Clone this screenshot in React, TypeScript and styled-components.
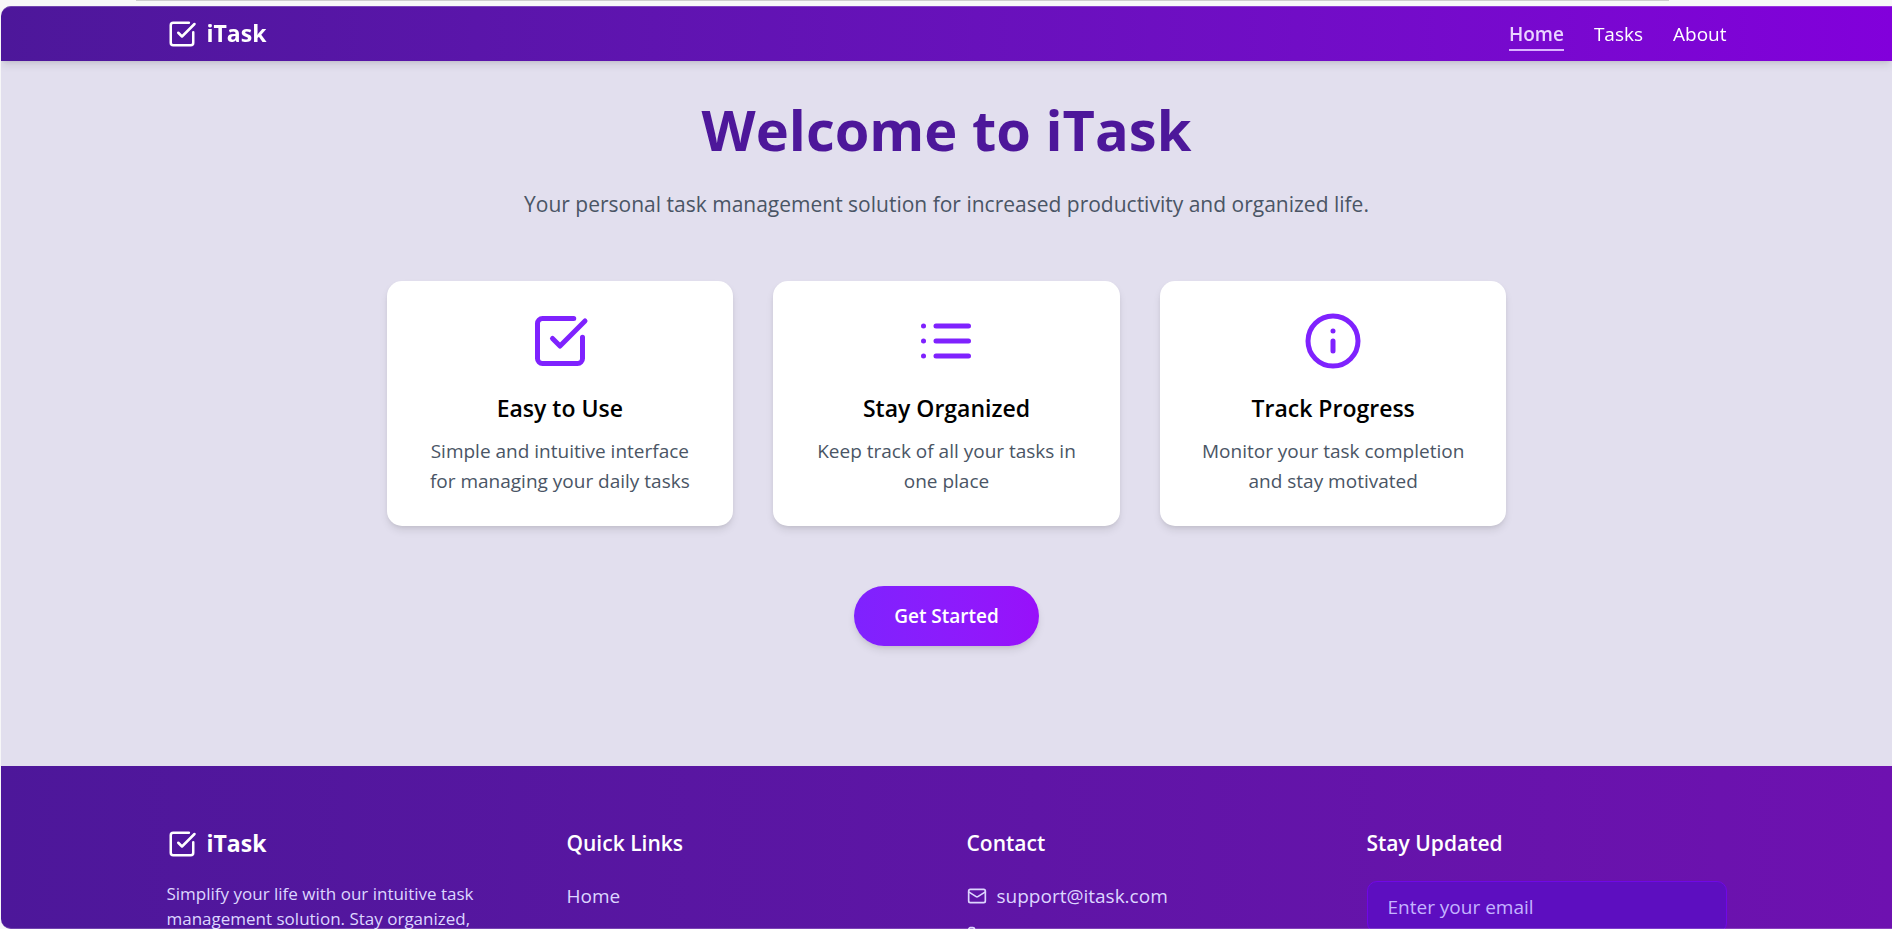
import React from "react";
import styled, { createGlobalStyle, css } from "styled-components";

const GlobalStyle = createGlobalStyle`
  *, *::before, *::after { box-sizing: border-box; }
  body {
    margin: 0;
    background: #f7f7f8;
    font-family: "Segoe UI", "Open Sans", "Noto Sans", sans-serif;
    font-size: 19px;
    line-height: 30px;
    color: #000;
  }
  h1, h2, h3, p, ul { margin: 0; padding: 0; }
  ul { list-style: none; }
  a { color: inherit; text-decoration: none; }
`;

const Window = styled.div`
  display: flex;
  flex-direction: column;
  height: 100vh;
  padding-left: 1px;
`;

const ToolbarEdge = styled.div`
  flex: none;
  height: 6px;
  padding: 0 223px 0 135px;

  &::before {
    content: "";
    display: block;
    height: 1px;
    background: #cdcdce;
  }
`;

const Viewport = styled.div`
  position: relative;
  flex: 1;
  min-height: 0;
  overflow: hidden;
  border-radius: 10px 0 0 10px;
  background: #e2dfee;

  &::after {
    content: "";
    position: absolute;
    inset: 0;
    z-index: 3;
    border: 1px solid rgba(255, 255, 255, 0.2);
    border-width: 1px 0;
    border-radius: inherit;
    pointer-events: none;
  }
`;

const Page = styled.div`
  height: 100%;
  overflow-y: auto;
  scrollbar-width: none;
`;

const Container = styled.div`
  width: 100%;
  max-width: 1600px;
  margin: 0 auto;
  padding: 0 20px;
`;

const Header = styled.header`
  position: sticky;
  top: 0;
  z-index: 2;
  color: #fff;
  background: linear-gradient(to right in oklab, #4d179a, #8200db);
  box-shadow: 0 5px 8px -1px rgba(0, 0, 0, 0.1), 0 2px 5px -2px rgba(0, 0, 0, 0.1);
`;

const HeaderRow = styled(Container)`
  display: flex;
  align-items: center;
  justify-content: space-between;
  padding-top: 10px;
  padding-bottom: 10px;
`;

const Brand = styled.a`
  display: flex;
  align-items: center;
  gap: 10px;
  font-size: 23px;
  font-weight: 700;
  line-height: 35px;
`;

const NavList = styled.ul`
  display: flex;
  gap: 30px;
`;

const NavLink = styled.a<{ $active?: boolean }>`
  position: relative;
  display: block;
  font-weight: 500;

  ${({ $active }) =>
    $active &&
    css`
      color: #e9d4ff;
      font-weight: 600;

      &::after {
        content: "";
        position: absolute;
        inset: 100% 0 auto;
        height: 2px;
        background: #dab2ff;
      }
    `}
`;

const Main = styled.main`
  max-width: 1160px;
  margin: 0 auto;
  padding: 40px 20px 120px;
  text-align: center;
`;

const Title = styled.h1`
  margin-bottom: 30px;
  font-size: 56px;
  line-height: 56px;
  font-weight: 700;
  color: #4d179a;
`;

const Subtitle = styled.p`
  margin-bottom: 60px;
  font-size: 21px;
  line-height: 34px;
  color: #4a5565;
`;

const Features = styled.div`
  display: grid;
  grid-template-columns: repeat(3, 1fr);
  gap: 40px;
  margin-bottom: 60px;
`;

const Card = styled.article`
  padding: 30px;
  border-radius: 15px;
  background: #fff;
  box-shadow: 0 5px 8px -1px rgba(0, 0, 0, 0.1), 0 2px 5px -2px rgba(0, 0, 0, 0.1);

  svg {
    display: block;
    margin: 0 auto 20px;
    color: #7f22fe;
  }
`;

const CardTitle = styled.h2`
  margin-bottom: 10px;
  font-size: 23px;
  line-height: 35px;
  font-weight: 600;
`;

const CardText = styled.p`
  color: #4a5565;
`;

const StartButton = styled.button`
  padding: 15px 40px;
  border: 0;
  border-radius: 30px;
  font: inherit;
  font-weight: 600;
  color: #fff;
  background: linear-gradient(to right in oklab, #7f22fe, #9810fa);
  box-shadow: 0 5px 8px -1px rgba(0, 0, 0, 0.1), 0 2px 5px -2px rgba(0, 0, 0, 0.1);
  cursor: pointer;
`;

const Footer = styled.footer`
  padding: 60px 0;
  color: #fff;
  background: linear-gradient(to right in oklab, #4d179a, #6e11b0);
`;

const FooterGrid = styled(Container)`
  display: grid;
  grid-template-columns: repeat(4, 1fr);
  gap: 40px;
`;

const FooterBrand = styled(Brand)`
  margin-bottom: 20px;
`;

const Blurb = styled.p`
  font-size: 17px;
  line-height: 25px;
  color: #ddd6ff;
`;

const FooterTitle = styled.h3`
  margin-bottom: 20px;
  font-size: 21px;
  line-height: 35px;
  font-weight: 600;
`;

const FooterList = styled.ul`
  display: grid;
  gap: 10px;
  color: #ddd6ff;
`;

const ContactItem = styled.li`
  display: flex;
  align-items: center;
  gap: 10px;
  min-height: 30px;
`;

const EmailInput = styled.input`
  display: block;
  width: 100%;
  padding: 10px 20px;
  border: 1px solid #7008e7;
  border-radius: 10px;
  font: inherit;
  color: #fff;
  background: #5d0ec0;

  &::placeholder {
    color: #c4b4ff;
    opacity: 1;
  }
`;

function Icon({ size, children }: { size: number; children: React.ReactNode }) {
  return (
    <svg
      width={size}
      height={size}
      viewBox="0 0 24 24"
      fill="none"
      stroke="currentColor"
      strokeWidth="2"
      strokeLinecap="round"
      strokeLinejoin="round"
      aria-hidden="true"
    >
      {children}
    </svg>
  );
}

const CheckIcon = ({ size }: { size: number }) => (
  <Icon size={size}>
    <path d="M21 10.5V19a2 2 0 0 1-2 2H5a2 2 0 0 1-2-2V5a2 2 0 0 1 2-2h12.5" />
    <path d="m9 11 3 3L22 4" />
  </Icon>
);

const ListIcon = ({ size }: { size: number }) => (
  <Icon size={size}>
    <path d="M8 6h13M8 12h13M8 18h13M3 6h.01M3 12h.01M3 18h.01" />
  </Icon>
);

const InfoIcon = ({ size }: { size: number }) => (
  <Icon size={size}>
    <circle cx="12" cy="12" r="10" />
    <path d="M12 16v-4M12 8h.01" />
  </Icon>
);

const MailIcon = ({ size }: { size: number }) => (
  <Icon size={size}>
    <rect x="2" y="4" width="20" height="16" rx="2" />
    <path d="m22 7-8.97 5.7a1.94 1.94 0 0 1-2.06 0L2 7" />
  </Icon>
);

const PhoneIcon = ({ size }: { size: number }) => (
  <Icon size={size}>
    <path d="M22 16.92v3a2 2 0 0 1-2.18 2 19.79 19.79 0 0 1-8.63-3.07 19.5 19.5 0 0 1-6-6 19.79 19.79 0 0 1-3.07-8.67A2 2 0 0 1 4.11 2h3a2 2 0 0 1 2 1.72c.13.96.36 1.9.7 2.81a2 2 0 0 1-.45 2.11L8.09 9.91a16 16 0 0 0 6 6l1.27-1.27a2 2 0 0 1 2.11-.45c.91.34 1.85.57 2.81.7A2 2 0 0 1 22 16.92z" />
  </Icon>
);

const features = [
  {
    icon: CheckIcon,
    title: "Easy to Use",
    text: "Simple and intuitive interface for managing your daily tasks",
  },
  {
    icon: ListIcon,
    title: "Stay Organized",
    text: "Keep track of all your tasks in one place",
  },
  {
    icon: InfoIcon,
    title: "Track Progress",
    text: "Monitor your task completion and stay motivated",
  },
];

const pages = ["Home", "Tasks", "About"];

export default function App() {
  return (
    <>
      <GlobalStyle />
      <Window>
        <ToolbarEdge />
        <Viewport>
          <Page>
            <Header>
              <HeaderRow>
                <Brand href="#home">
                  <CheckIcon size={30} />
                  iTask
                </Brand>
                <nav>
                  <NavList>
                    {pages.map((page) => (
                      <li key={page}>
                        <NavLink href={`#${page.toLowerCase()}`} $active={page === "Home"}>
                          {page}
                        </NavLink>
                      </li>
                    ))}
                  </NavList>
                </nav>
              </HeaderRow>
            </Header>

            <Main>
              <Title>Welcome to iTask</Title>
              <Subtitle>
                Your personal task management solution for increased productivity and organized life.
              </Subtitle>
              <Features>
                {features.map(({ icon: FeatureIcon, title, text }) => (
                  <Card key={title}>
                    <FeatureIcon size={60} />
                    <CardTitle>{title}</CardTitle>
                    <CardText>{text}</CardText>
                  </Card>
                ))}
              </Features>
              <StartButton type="button">Get Started</StartButton>
            </Main>

            <Footer>
              <FooterGrid>
                <section>
                  <FooterBrand href="#home">
                    <CheckIcon size={30} />
                    iTask
                  </FooterBrand>
                  <Blurb>Simplify your life with our intuitive task management solution. Stay organized,</Blurb>
                </section>
                <section>
                  <FooterTitle>Quick Links</FooterTitle>
                  <FooterList>
                    <li>
                      <a href="#home">Home</a>
                    </li>
                  </FooterList>
                </section>
                <section>
                  <FooterTitle>Contact</FooterTitle>
                  <FooterList>
                    <ContactItem>
                      <MailIcon size={20} />
                      <a href="mailto:support@itask.com">support@itask.com</a>
                    </ContactItem>
                    <ContactItem>
                      <PhoneIcon size={20} />
                    </ContactItem>
                  </FooterList>
                </section>
                <section>
                  <FooterTitle>Stay Updated</FooterTitle>
                  <EmailInput type="email" placeholder="Enter your email" aria-label="Email address" />
                </section>
              </FooterGrid>
            </Footer>
          </Page>
        </Viewport>
      </Window>
    </>
  );
}
